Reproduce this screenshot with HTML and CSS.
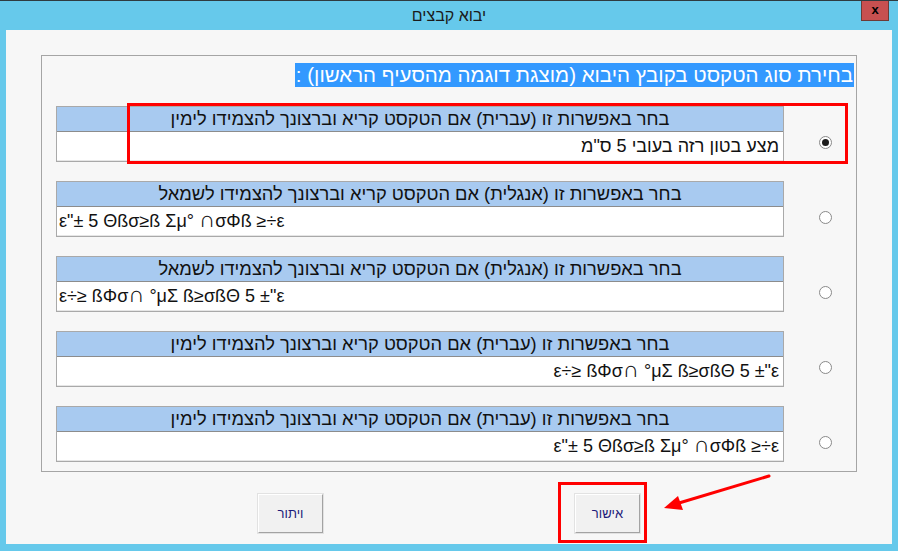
FILE: index.html
```html
<!DOCTYPE html>
<html lang="he" dir="rtl">
<head>
    <meta charset="UTF-8">
    <meta name="viewport" content="width=device-width, initial-scale=1.0">
    <title>יבוא קבצים</title>
    <link rel="stylesheet" href="styles.css">
</head>
<body>
<div class="window">
    <div class="titlebar">
        <span class="close">x</span>
        <span class="title">יבוא קבצים</span>
    </div>

    <div class="client">
        <div class="groupbox">
            <div class="group-label"><span>בחירת סוג הטקסט בקובץ היבוא (מוצגת דוגמה מהסעיף הראשון) :</span></div>

            <div class="option">
                <span class="radio checked"></span>
                <div class="panel">
                    <div class="panel-head">בחר באפשרות זו (עברית) אם הטקסט קריא וברצונך להצמידו לימין</div>
                    <div class="panel-body">מצע בטון רזה בעובי 5 ס"מ</div>
                </div>
            </div>

            <div class="option">
                <span class="radio"></span>
                <div class="panel">
                    <div class="panel-head">בחר באפשרות זו (אנגלית) אם הטקסט קריא וברצונך להצמידו לשמאל</div>
                    <div class="panel-body ltr"><bdo dir="ltr">ε"± 5 Θßσ≥ß Σμ° <span class="cap">∩</span>σΦß ≥÷ε</bdo></div>
                </div>
            </div>

            <div class="option">
                <span class="radio"></span>
                <div class="panel">
                    <div class="panel-head">בחר באפשרות זו (אנגלית) אם הטקסט קריא וברצונך להצמידו לשמאל</div>
                    <div class="panel-body ltr"><bdo dir="ltr">ε÷≥ ßΦσ<span class="cap">∩</span> °μΣ ß≥σßΘ 5 ±"ε</bdo></div>
                </div>
            </div>

            <div class="option">
                <span class="radio"></span>
                <div class="panel">
                    <div class="panel-head">בחר באפשרות זו (עברית) אם הטקסט קריא וברצונך להצמידו לימין</div>
                    <div class="panel-body"><bdo dir="ltr">ε÷≥ ßΦσ<span class="cap">∩</span> °μΣ ß≥σßΘ 5 ±"ε</bdo></div>
                </div>
            </div>

            <div class="option">
                <span class="radio"></span>
                <div class="panel">
                    <div class="panel-head">בחר באפשרות זו (עברית) אם הטקסט קריא וברצונך להצמידו לימין</div>
                    <div class="panel-body"><bdo dir="ltr">ε"± 5 Θßσ≥ß Σμ° <span class="cap">∩</span>σΦß ≥÷ε</bdo></div>
                </div>
            </div>
        </div>

        <div class="buttons">
            <button class="btn">אישור</button>
            <button class="btn">ויתור</button>
        </div>
    </div>

    <!-- annotations drawn on top of the screenshot -->
    <div class="mark mark-option"></div>
    <div class="mark mark-ok"></div>
    <svg class="arrow" width="898" height="551" viewBox="0 0 898 551">
        <line x1="769" y1="476" x2="679" y2="503" stroke="#ff0000" stroke-width="3" stroke-linecap="round"/>
        <polygon points="664,508 678,496 683,510" fill="#ff0000"/>
    </svg>
</div>
</body>
</html>
```

FILE: styles.css
```css
* {
    box-sizing: border-box;
}
body {
    margin: 0;
    font-family: "Liberation Sans", "DejaVu Sans", sans-serif;
    color: #111;
}
.window {
    position: relative;
    width: 898px;
    height: 551px;
    background-color: #66c9eb;
    display: flex;
    flex-direction: column;
    overflow: hidden;
}

/* title bar */
.titlebar {
    height: 30px;
    border-top: 1px solid #2f3b40;
    display: grid;
    grid-template-columns: 1fr auto 1fr;
}
.close {
    grid-column: 1;
    grid-row: 1;
    justify-self: start;
    margin-right: 9px;
    width: 28px;
    height: 20px;
    background-color: #c75050;
    border: 1px solid #6e3a36;
    border-top: none;
    color: #000;
    font-weight: bold;
    font-size: 13px;
    line-height: 17px;
    text-align: center;
}
.title {
    grid-column: 2;
    grid-row: 1;
    font-size: 16px;
    line-height: 30px;
    color: #1b1b1b;
}

/* client area */
.client {
    height: 514px;
    margin: 0 6px;
    background-color: #f7f7f7;
    display: flex;
    flex-direction: column;
}
.groupbox {
    width: 816px;
    height: 417px;
    margin-top: 25px;
    margin-right: 35px;
    border: 1px solid #a5a5a5;
    padding: 7px 0 9px 0;
    display: flex;
    flex-direction: column;
    gap: 19px;
}
.group-label {
    height: 24px;
    padding-right: 2px;
}
.group-label span {
    display: inline-block;
    height: 24px;
    line-height: 24px;
    padding: 0 1px;
    background-color: #3399ff;
    color: #fff;
    font-size: 20.5px;
    white-space: nowrap;
}

.option {
    display: flex;
    height: 56px;
}
.radio {
    width: 13px;
    height: 13px;
    margin: 30px 24px 0 35px;
    border: 1px solid #8a8a8a;
    border-radius: 50%;
    background-color: #fff;
    display: flex;
    align-items: center;
    justify-content: center;
    flex-shrink: 0;
}
.radio.checked::after {
    content: "";
    width: 7px;
    height: 7px;
    border-radius: 50%;
    background-color: #1d1d1d;
}
.panel {
    width: 728px;
    border: 1px solid #a9a9a9;
    background-color: #fff;
}
.panel-head {
    height: 25px;
    line-height: 24px;
    background-color: #a8caf0;
    border-bottom: 1px solid #8c8c8c;
    text-align: center;
    font-size: 18.3px;
    white-space: nowrap;
}
.panel-body {
    height: 29px;
    line-height: 28px;
    padding: 0 4px 0 2px;
    border-bottom: 1px solid #e6e6e6;
    font-size: 18px;
    white-space: nowrap;
}
.panel-body.ltr {
    direction: ltr;
    text-align: left;
}
.cap {
    font-size: 1.25em;
    line-height: 1;
}

/* buttons */
.buttons {
    display: flex;
    gap: 252px;
    margin-top: 22px;
    padding-right: 252px;
}
.btn {
    width: 65px;
    height: 39px;
    background-color: #f1f1f1;
    border: 1px solid;
    border-color: #ffffff #a3a3a3 #a3a3a3 #ffffff;
    box-shadow: 0 0 0 1px #e2e2e2;
    font-family: "Liberation Sans", "DejaVu Sans", sans-serif;
    font-size: 13px;
    color: #1c1a7a;
    padding: 0;
}

/* red annotation marks */
.mark {
    position: absolute;
    border: 3px solid #ff0000;
}
.mark-option {
    left: 127px;
    top: 103px;
    width: 721px;
    height: 61px;
}
.mark-ok {
    left: 558px;
    top: 482px;
    width: 89px;
    height: 61px;
}
.arrow {
    position: absolute;
    left: 0;
    top: 0;
    pointer-events: none;
}
```
